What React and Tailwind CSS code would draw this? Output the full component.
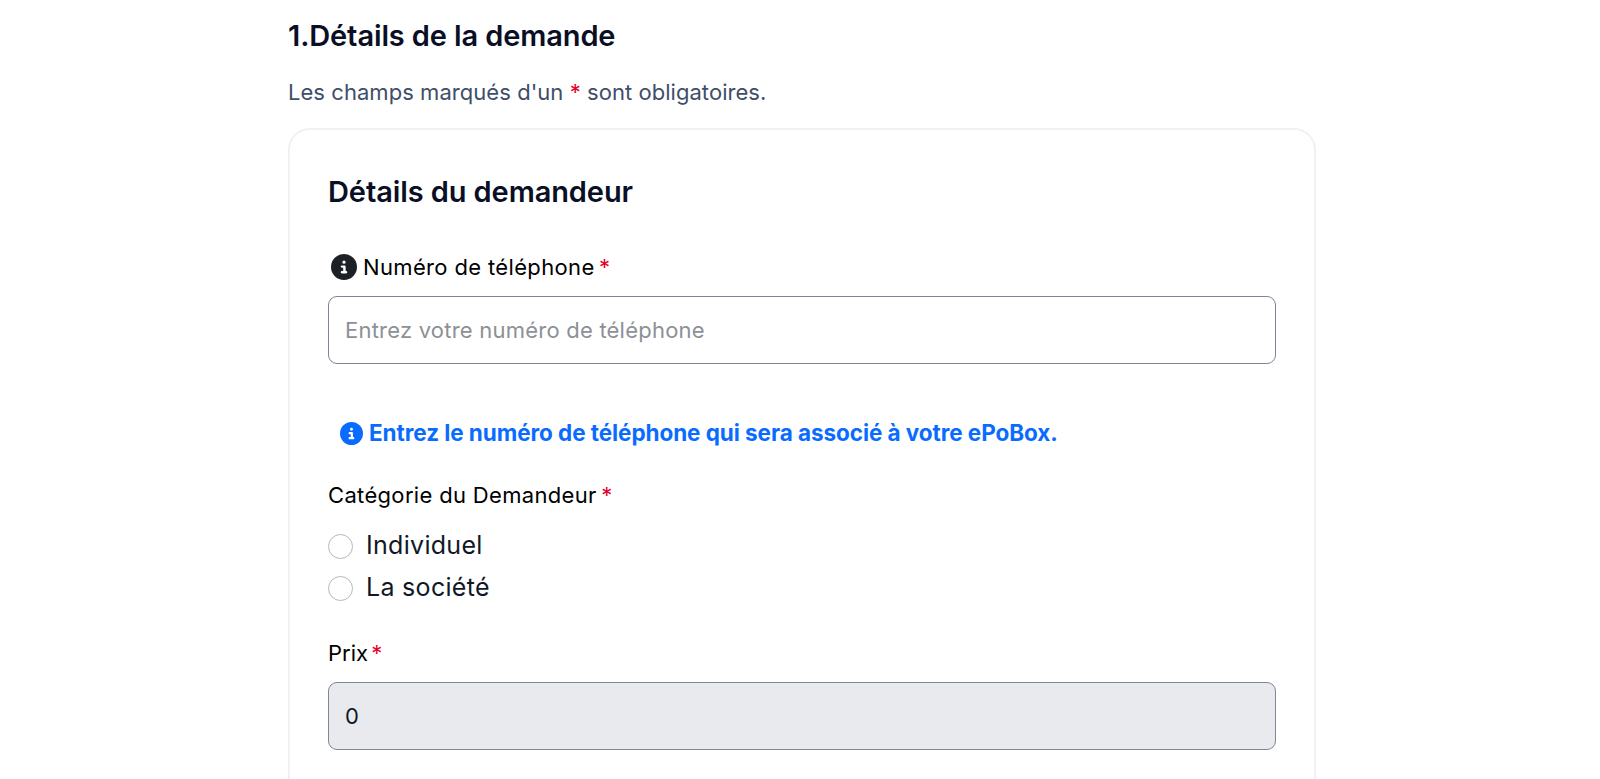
import { FaCircleInfo } from 'react-icons/fa6'

const font = { fontFamily: 'Inter, "Noto Sans", sans-serif' }

function Star({ className = '' }) {
  return <span className={`text-[#e4002b] ${className}`}>*</span>
}

function Radio({ label }) {
  return (
    <label className="flex items-center gap-[13px] h-[42px]">
      <span className="w-[25px] h-[25px] rounded-full border border-[#b8b8b8] bg-white"></span>
      <span className="text-[25px] text-[#101828] tracking-[0.3px]">{label}</span>
    </label>
  )
}

export default function App() {
  return (
    <div className="h-[779px] overflow-hidden bg-white pl-[288px]" style={font}>
      <div className="w-[1028px]">
        <h1 className="pt-[15px] text-[29px] leading-[42px] font-semibold text-[#0a0f25] tracking-[-0.12px]">
          1.Détails de la demande
        </h1>
        <p className="mt-[20px] text-[22px] leading-[30px] text-[#3f4e68] tracking-[0.05px]">
          Les champs marqués d'un <Star /> sont obligatoires.
        </p>

        <div className="mt-[21px] h-[800px] rounded-[22px] border-2 border-[#f0f1f5] px-[38px] pt-[44px]">
          <h2 className="text-[29px] leading-[36px] font-semibold text-[#0a0f25] tracking-[-0.1px]">
            Détails du demandeur
          </h2>

          <div className="mt-[40px] flex items-center gap-[6px] pl-[3px] h-[34px] text-[22px] text-black tracking-[0.35px]">
            <FaCircleInfo className="text-[#1d2127] text-[26px]" />
            <span>
              Numéro de téléphone <Star className="-ml-[2px]" />
            </span>
          </div>
          <input
            readOnly
            placeholder="Entrez votre numéro de téléphone"
            className="mt-[12px] block w-[948px] h-[68px] rounded-[9px] border border-[#7f8498] px-[16px] text-[22px] tracking-[0.22px] placeholder:text-[#8d9095] outline-none"
          />

          <div className="mt-[52px] flex items-center gap-[6px] pl-[12px] h-[34px] text-[22.5px] font-bold text-[#0a6cff] tracking-[-0.07px]">
            <FaCircleInfo className="text-[23px]" />
            <span>Entrez le numéro de téléphone qui sera associé à votre ePoBox.</span>
          </div>

          <div className="mt-[28px] h-[34px] flex items-center text-[22px] text-black tracking-[0.33px]">
            <span>
              Catégorie du Demandeur <Star className="-ml-[2px]" />
            </span>
          </div>
          <div className="mt-[13px]">
            <Radio label="Individuel" />
            <Radio label="La société" />
          </div>

          <div className="mt-[27px] h-[34px] flex items-center text-[22px] text-black">
            <span>
              Prix <Star className="-ml-[3px]" />
            </span>
          </div>
          <input
            readOnly
            value="0"
            className="mt-[12px] block w-[948px] h-[68px] rounded-[9px] border border-[#7f8498] bg-[#e9eaee] px-[16px] text-[22px] text-[#101828] outline-none"
          />
        </div>
      </div>
    </div>
  )
}
